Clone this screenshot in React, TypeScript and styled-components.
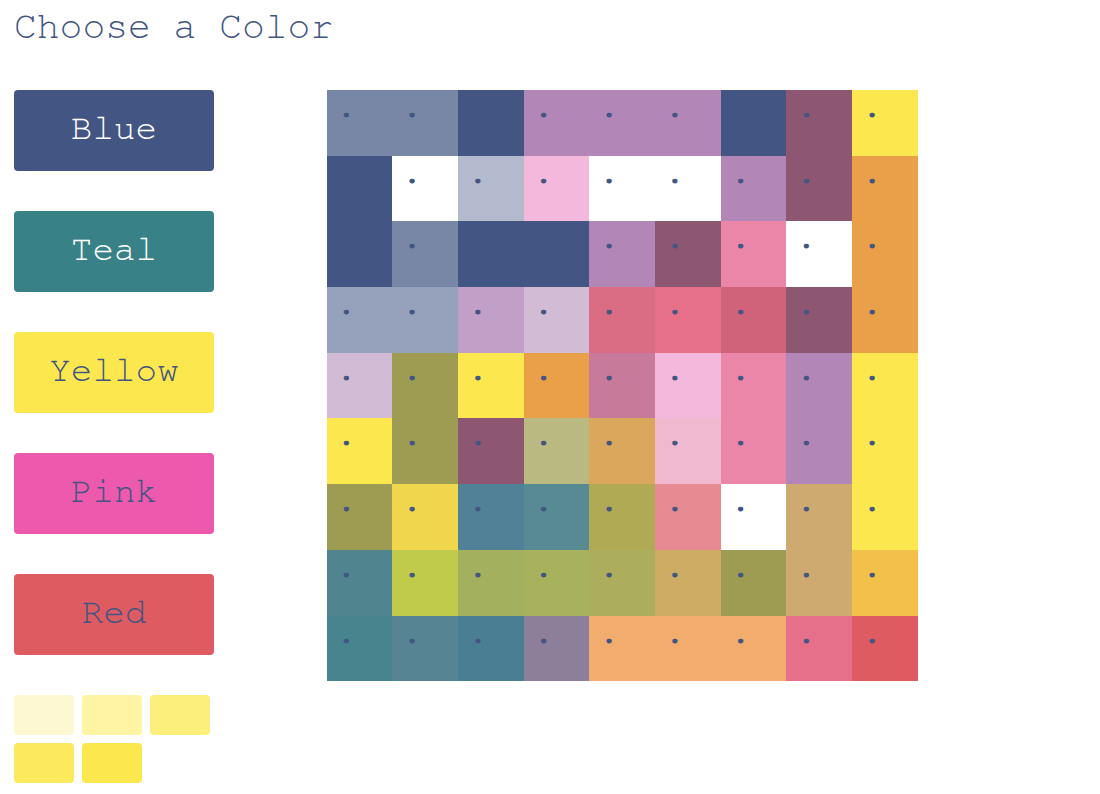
import React, { useState } from "react";
import styled, { createGlobalStyle } from "styled-components";

const ink = "#425583";
const courier = `"FreeMono", "Nimbus Mono PS", "Courier New", "Liberation Mono", monospace`;

const GlobalStyle = createGlobalStyle`
  * { box-sizing: border-box; }
  body {
    margin: 0;
    background: #fff;
    color: ${ink};
    font-family: ${courier};
  }
`;

const Page = styled.main`
  padding: 5px 14px 8px;
`;

const Title = styled.h1`
  margin: 0 0 41px;
  font-size: 38px;
  line-height: 44px;
  font-weight: 400;
`;

const Workspace = styled.div`
  display: grid;
  grid-template-columns: 29.16% 55.155%;
  align-items: start;
`;

const Palette = styled.div`
  display: flex;
  flex-direction: column;
  gap: 40px;
  width: 200px;
`;

const ColorButton = styled.button<{ $fill: string; $text: string }>`
  padding: 18px 0 22px;
  border: 0;
  border-radius: 4px;
  background: ${(p) => p.$fill};
  color: ${(p) => p.$text};
  font-family: inherit;
  font-size: 36px;
  line-height: 41px;
  text-align: center;
  cursor: pointer;
`;

const Shades = styled.div`
  display: flex;
  flex-wrap: wrap;
  gap: 8px;
`;

const Shade = styled.button<{ $fill: string }>`
  width: 60px;
  height: 40px;
  padding: 0;
  border: 0;
  border-radius: 4px;
  background: ${(p) => p.$fill};
  cursor: pointer;
`;

const Board = styled.div`
  display: grid;
  grid-template: repeat(9, 1fr) / repeat(9, 1fr);
  aspect-ratio: 1;
`;

const Cell = styled.button<{ $fill: string }>`
  display: flex;
  align-items: flex-start;
  min-width: 0;
  min-height: 0;
  padding: 0 9px;
  border: 0;
  background: ${(p) => p.$fill};
  color: ${ink};
  font-family: inherit;
  font-size: 36px;
  line-height: 32px;
  cursor: pointer;
`;

const colors = [
  { name: "Blue", fill: "#425583", text: "#fff" },
  { name: "Teal", fill: "#388186", text: "#fff" },
  { name: "Yellow", fill: "#fce74e", text: ink },
  { name: "Pink", fill: "#ed5aad", text: ink },
  { name: "Red", fill: "#df5b62", text: ink },
];

const yellows = ["#fef8d2", "#fef4a4", "#fdef7c", "#fde95d", "#fce74e"];

const picture = [
  ["#7987a7", "#7987a7", "#425583", "#b286b7", "#b286b7", "#b286b7", "#425583", "#8d5671", "#fce74e"],
  ["#425583", "#ffffff", "#b3bacd", "#f3b8dc", "#ffffff", "#ffffff", "#b286b7", "#8d5671", "#ea9f49"],
  ["#425583", "#7987a7", "#425583", "#425583", "#b286b7", "#8d5671", "#eb86a8", "#ffffff", "#ea9f49"],
  ["#96a1bc", "#96a1bc", "#c19fc6", "#d2bbd5", "#da6d83", "#e67089", "#d06379", "#8d5671", "#ea9f49"],
  ["#d2bbd5", "#9e9c52", "#fce74e", "#ea9f49", "#c77a9a", "#f3b8dc", "#eb86a8", "#b286b7", "#fce74e"],
  ["#fce74e", "#9e9c52", "#8d5671", "#bab981", "#daa75c", "#f0b9cf", "#eb86a8", "#b286b7", "#fce74e"],
  ["#9e9c52", "#efd64d", "#518197", "#578a93", "#b0aa55", "#e78a91", "#ffffff", "#cfaa70", "#fce74e"],
  ["#50848f", "#c1cb4b", "#a3b05d", "#a8b25c", "#acad5d", "#cdac64", "#9e9c52", "#cfaa70", "#f3c149"],
  ["#47848e", "#578492", "#4a7f93", "#8d7f99", "#f2ac6e", "#f2ac6e", "#f2ac6e", "#e67089", "#df5b62"],
];

export default function App() {
  const [brush, setBrush] = useState("#fce74e");
  const [cells, setCells] = useState(picture.flat());

  const paint = (index: number) =>
    setCells((prev) => prev.map((fill, i) => (i === index ? brush : fill)));

  return (
    <>
      <GlobalStyle />
      <Page>
        <Title>Choose a Color</Title>
        <Workspace>
          <Palette>
            {colors.map((c) => (
              <ColorButton key={c.name} $fill={c.fill} $text={c.text} onClick={() => setBrush(c.fill)}>
                {c.name}
              </ColorButton>
            ))}
            <Shades>
              {yellows.map((fill, i) => (
                <Shade key={fill} $fill={fill} aria-label={`Yellow shade ${i + 1}`} onClick={() => setBrush(fill)} />
              ))}
            </Shades>
          </Palette>
          <Board>
            {cells.map((fill, i) => (
              <Cell key={i} $fill={fill} onClick={() => paint(i)}>
                .
              </Cell>
            ))}
          </Board>
        </Workspace>
      </Page>
    </>
  );
}
